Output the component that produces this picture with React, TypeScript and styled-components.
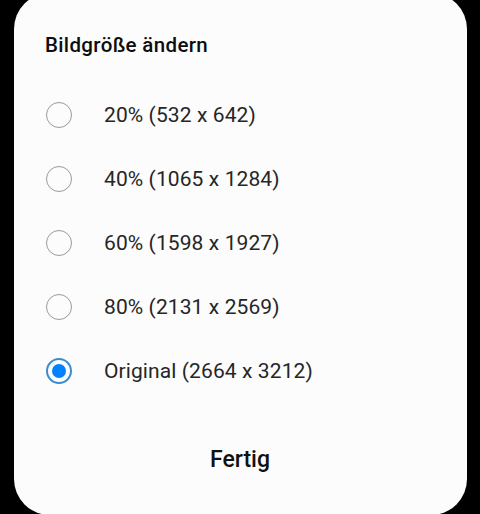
import React, { useState } from 'react';
import styled, { createGlobalStyle } from 'styled-components';

const GlobalStyle = createGlobalStyle`
  html, body {
    margin: 0;
    padding: 0;
    height: 514px;
    overflow: hidden;
    background: #000;
  }
  body {
    font-family: Roboto, 'Noto Sans', 'Liberation Sans', sans-serif;
  }
`;

const Screen = styled.div`
  width: 480px;
  height: 514px;
  background: #000;
  padding: 0 13px 0 14px;
  box-sizing: border-box;
`;

const Sheet = styled.div`
  margin-top: -7px;
  height: 522px;
  box-sizing: border-box;
  background: #fcfcfc;
  border-radius: 36px;
  padding: 40px 0 0 31px;
  display: flex;
  flex-direction: column;
`;

const Title = styled.div`
  font-size: 20.5px;
  line-height: 24px;
  font-weight: 500;
  color: #0d0d0d;
  letter-spacing: 0.35px;
  margin-bottom: 26px;
`;

const OptionList = styled.div`
  display: flex;
  flex-direction: column;
`;

const OptionRow = styled.label`
  height: 64px;
  display: flex;
  align-items: center;
  gap: 32px;
  cursor: pointer;
`;

const Radio = styled.span<{ $checked: boolean }>`
  width: 26px;
  height: 26px;
  margin-left: 1px;
  box-sizing: border-box;
  border-radius: 50%;
  border: ${(p) => (p.$checked ? '2px solid #3a8dd2' : '1.5px solid #9a9a9a')};
  display: flex;
  align-items: center;
  justify-content: center;
  flex-shrink: 0;

  &::after {
    content: '';
    width: 14px;
    height: 14px;
    border-radius: 50%;
    background: #0381fe;
    display: ${(p) => (p.$checked ? 'block' : 'none')};
  }
`;

const OptionLabel = styled.span`
  font-size: 21px;
  color: #262626;
  letter-spacing: 0.1px;
`;

const Footer = styled.div`
  margin-top: 28px;
  height: 56px;
  display: flex;
  align-items: center;
  justify-content: center;
  padding-right: 32px;
`;

const DoneButton = styled.button`
  background: none;
  border: none;
  padding: 0 16px;
  font-family: inherit;
  font-size: 23px;
  font-weight: 500;
  color: #111;
  cursor: pointer;
`;

const options = [
  '20% (532 x 642)',
  '40% (1065 x 1284)',
  '60% (1598 x 1927)',
  '80% (2131 x 2569)',
  'Original (2664 x 3212)',
];

export default function App() {
  const [selected, setSelected] = useState(4);

  return (
    <>
      <GlobalStyle />
      <Screen>
        <Sheet>
          <Title>Bildgröße ändern</Title>
          <OptionList>
            {options.map((label, i) => (
              <OptionRow key={label} onClick={() => setSelected(i)}>
                <Radio $checked={selected === i} />
                <OptionLabel>{label}</OptionLabel>
              </OptionRow>
            ))}
          </OptionList>
          <Footer>
            <DoneButton>Fertig</DoneButton>
          </Footer>
        </Sheet>
      </Screen>
    </>
  );
}
